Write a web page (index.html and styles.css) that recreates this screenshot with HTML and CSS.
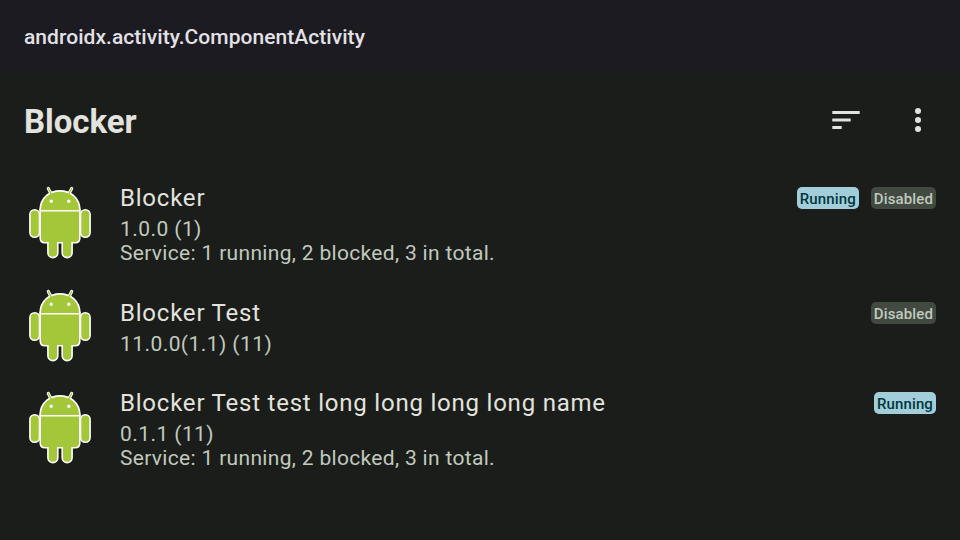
FILE: index.html
```html
<!DOCTYPE html>
<html lang="en">
<head>
<meta charset="utf-8">
<title>Blocker</title>
<link rel="stylesheet" href="styles.css">
</head>
<body>
<svg class="defs" aria-hidden="true">
<symbol id="robot" viewBox="0 0 72 80">
<g class="outline">
<path d="M24.300 4.500 28 11.500M47.700 4.500 44 11.500"/>
<path d="M17 26C17 1.500 55 1.500 55 26Z"/>
<rect x="6.700" y="26.500" width="8" height="26" rx="4"/><rect x="57.300" y="26.500" width="8" height="26" rx="4"/>
<rect x="24.700" y="50" width="8.300" height="22.800" rx="4.100"/><rect x="39" y="50" width="8.300" height="22.800" rx="4.100"/>
<path d="M17 26H55V54Q55 58 51 58H21Q17 58 17 54Z"/>
</g>
<g class="fill">
<path class="antenna" d="M24.300 4.500 28 11.500M47.700 4.500 44 11.500"/>
<path d="M17 26C17 1.500 55 1.500 55 26Z"/>
<rect x="6.700" y="26.500" width="8" height="26" rx="4"/><rect x="57.300" y="26.500" width="8" height="26" rx="4"/>
<rect x="24.700" y="50" width="8.300" height="22.800" rx="4.100"/><rect x="39" y="50" width="8.300" height="22.800" rx="4.100"/>
<path d="M17 27.400H55V54Q55 58 51 58H21Q17 58 17 54Z"/>
</g>
<circle class="eye" cx="27.200" cy="17.300" r="1.700"/><circle class="eye" cx="44.800" cy="17.300" r="1.700"/>
</symbol>
</svg>
<header class="activity">androidx.activity.ComponentActivity</header>
<main>
<div class="toolbar"><h1>Blocker</h1>
<svg class="sort" viewBox="0 0 32 32"><path d="M2.300 7h27.400v2.900H2.300zM2.300 14.600h18.400v2.900H2.300zM2.300 22.100h9.400V25H2.300z"/></svg>
<svg class="more" viewBox="0 0 32 32"><circle cx="16" cy="7" r="3"/><circle cx="16" cy="16" r="3"/><circle cx="16" cy="25" r="3"/></svg>
</div>
<ul>
<li class="app"><svg class="icon"><use href="#robot"/></svg><div class="info"><h2>Blocker</h2><p class="version">1.0.0 (1)</p><p>Service: 1 running, 2 blocked, 3 in total.</p></div><div class="tags"><span class="tag running">Running</span><span class="tag">Disabled</span></div></li>
<li class="app short"><svg class="icon"><use href="#robot"/></svg><div class="info"><h2>Blocker Test</h2><p class="version">11.0.0(1.1) (11)</p></div><div class="tags"><span class="tag">Disabled</span></div></li>
<li class="app"><svg class="icon"><use href="#robot"/></svg><div class="info"><h2>Blocker Test test long long long long name</h2><p class="version">0.1.1 (11)</p><p>Service: 1 running, 2 blocked, 3 in total.</p></div><div class="tags"><span class="tag running">Running</span></div></li>
</ul>
</main>
</body>
</html>
```
FILE: styles.css
```css
*{box-sizing:border-box}
body{margin:0;height:540px;overflow:hidden;background:#1b1d1a;color:#e2e3de;font-family:Roboto,sans-serif}
h1,h2,p,ul{margin:0;padding:0}
.defs{position:absolute;width:0;height:0}
.activity{height:72px;padding:0 24px;background:#1b1b21;color:#e3e1e6;font-size:21px;font-weight:500;line-height:74px;letter-spacing:.05px}
.toolbar{display:flex;align-items:center;height:96px;padding:0 26px 0 24px}
h1{flex:1;font-size:33px;font-weight:700;line-height:40px;padding-top:4px;letter-spacing:-.05px}
.toolbar svg{width:32px;height:32px;fill:#e2e3de}
.more{margin-left:40px}
.app{display:flex;height:115px;padding:16px 24px 0}
.app.short{height:90px}
.icon{width:72px;height:80px;flex:none}
.short .icon{margin-top:-12.5px}
.info{flex:1;padding-left:24px}
h2{font-size:24px;font-weight:400;letter-spacing:.78px;line-height:28px}
p{font-size:21px;line-height:25px;letter-spacing:.32px;color:#c0c9be}
.version{margin-top:5px;line-height:24px;letter-spacing:.43px}
.tags{display:flex;gap:12px;padding-top:3px}
.tag{height:22px;padding:0 3px;border-radius:5px;background:#414941;color:#c0c9be;font-size:15px;font-weight:500;line-height:24px;letter-spacing:.13px}
.running{background:#a2ceda;color:#023640}
.outline{fill:#fff;stroke:#fff;stroke-width:3.2;stroke-linecap:round}
.fill{fill:#a4c639}
.antenna{stroke:#a4c639;stroke-width:1.3;stroke-linecap:round}
.eye{fill:#fff}
```
